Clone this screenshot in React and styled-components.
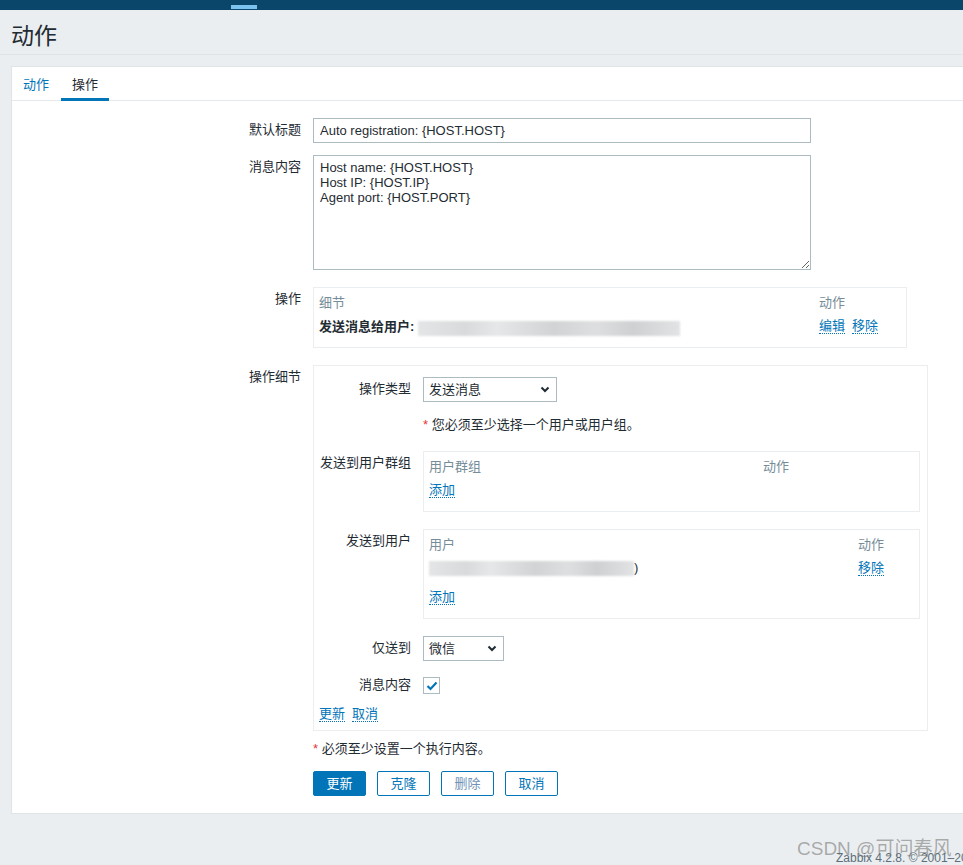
import React from "react";
import styled, { createGlobalStyle } from "styled-components";

const GlobalStyle = createGlobalStyle`
  body {
    margin: 0;
    background: #ebeef0;
    font-family: "Liberation Sans", Arial, "Noto Sans CJK SC", sans-serif;
    font-size: 13px;
    color: #1f2c33;
  }
`;

const TopBar = styled.div`
  height: 10px;
  background: #0a466a;
  display: flex;
  align-items: flex-end;
  padding-left: 231px;
`;

const TopMark = styled.div`
  width: 26px;
  height: 4px;
  margin-bottom: 1px;
  background: #7cc2ef;
`;

const Header = styled.header`
  box-sizing: border-box;
  height: 45px;
  display: flex;
  align-items: center;
  padding: 8px 0 0 11px;
  border-bottom: 1px solid #dfe4e7;
`;

const Title = styled.h1`
  margin: 0;
  font-size: 23px;
  font-weight: normal;
  line-height: 28px;
`;

const Panel = styled.main`
  margin: 11px 0 0 11px;
  background: #fff;
  border: 1px solid #dfe4e7;
  border-right: none;
  padding-bottom: 17px;
`;

const TabBar = styled.nav`
  display: flex;
  gap: 1px;
  border-bottom: 1px solid #e6eaec;
`;

const Tab = styled.span`
  padding: 4px 11px 0;
  line-height: 27px;
  margin-bottom: -1px;
  border-bottom: 3px solid ${(p) => (p.$active ? "#0275b8" : "transparent")};
  color: ${(p) => (p.$active ? "#1f2c33" : "#0275b8")};
`;

const Form = styled.div`
  padding-top: 17px;
`;

const FormRow = styled.div`
  display: grid;
  grid-template-columns: ${(p) => p.$labelWidth || 289}px 1fr;
  column-gap: 12px;
  margin-top: ${(p) => p.$mt || 0}px;
  align-items: start;
`;

const Label = styled.div`
  text-align: right;
  padding-top: ${(p) => (p.$pt === undefined ? 5 : p.$pt)}px;
  line-height: 14px;
  white-space: nowrap;
`;

const TextInput = styled.input`
  box-sizing: border-box;
  width: 498px;
  height: 25px;
  border: 1px solid #acbbc2;
  padding: 0 5px 0 6px;
  font: inherit;
  color: #1f2c33;
  outline: none;
`;

const TextArea = styled.textarea`
  box-sizing: border-box;
  display: block;
  width: 498px;
  height: 115px;
  border: 1px solid #acbbc2;
  padding: 4px 5px 4px 6px;
  font: inherit;
  line-height: 15px;
  color: #1f2c33;
  outline: none;
`;

const MiniTable = styled.div`
  box-sizing: border-box;
  width: ${(p) => p.$width}px;
  border: 1px solid #ebeef0;
  padding: 2px 5px 8px;
`;

const TableRow = styled.div`
  display: grid;
  grid-template-columns: 1fr ${(p) => p.$actionWidth}px;
  align-items: center;
  height: ${(p) => (p.$head ? 22 : 26)}px;
  margin-top: ${(p) => p.$mt || 0}px;
  margin-bottom: ${(p) => (p.$head ? 1 : 0)}px;
  color: ${(p) => (p.$head ? "#768d99" : "#1f2c33")};
  white-space: nowrap;
`;

const Strong = styled.span`
  font-weight: bold;
`;

const Redacted = styled.span`
  display: inline-block;
  vertical-align: middle;
  width: ${(p) => p.$width}px;
  height: 15px;
  background: linear-gradient(
    90deg,
    #e4e5e6 0%,
    #d9dadb 18%,
    #e6e7e8 30%,
    #d2d3d4 52%,
    #dedfe0 68%,
    #cfd0d2 82%,
    #e2e3e4 100%
  );
  filter: blur(1.2px);
`;

const Links = styled.div`
  display: flex;
  gap: 7px;
  line-height: 14px;
  margin-top: ${(p) => p.$mt || 0}px;
`;

const Link = styled.a`
  color: #0275b8;
  text-decoration: none;
  border-bottom: 1px dotted #0275b8;
  cursor: pointer;
`;

const DetailBox = styled.div`
  box-sizing: border-box;
  width: 615px;
  border: 1px solid #ebeef0;
  padding: 11px 6px 8px 5px;
`;

const Select = styled.div`
  box-sizing: border-box;
  width: ${(p) => p.$width}px;
  height: 25px;
  border: 1px solid #acbbc2;
  padding: 0 6px 0 5px;
  display: flex;
  align-items: center;
  justify-content: space-between;
  line-height: 14px;
`;

const Note = styled.div`
  line-height: 14px;
`;

const Star = styled.span`
  color: #e33734;
`;

const CheckBox = styled.div`
  box-sizing: border-box;
  width: 17px;
  height: 17px;
  border: 1px solid #acbbc2;
  display: flex;
  align-items: center;
  justify-content: center;
`;

const ButtonRow = styled.div`
  display: flex;
  gap: 11px;
`;

const Button = styled.button`
  width: 53px;
  height: 25px;
  padding: 0;
  border: 1px solid #0275b8;
  border-radius: 2px;
  background: ${(p) => (p.$primary ? "#0275b8" : "#fff")};
  color: ${(p) => (p.$primary ? "#fff" : p.$muted ? "#7193b8" : "#0275b8")};
  font: inherit;
  line-height: 14px;
  cursor: pointer;
`;

const Footer = styled.footer`
  position: relative;
  height: 52px;
  overflow: hidden;
`;

const FooterText = styled.div`
  padding: 37px 0 0 836px;
  line-height: 14px;
  font-size: 12px;
  color: #5b6f7b;
  white-space: nowrap;
`;

const Watermark = styled.div`
  position: absolute;
  left: 797px;
  top: 25px;
  font-size: 19px;
  line-height: 20px;
  color: rgba(110, 110, 110, 0.55);
  white-space: nowrap;
`;

const Chevron = () => (
  <svg width="10" height="7" viewBox="0 0 10 7">
    <path d="M1.5 1.5 5 5l3.5-3.5" fill="none" stroke="#1f2c33" strokeWidth="2" />
  </svg>
);

const Check = () => (
  <svg width="12" height="10" viewBox="0 0 12 10">
    <path d="M1.5 5 4.5 8 10.5 1.5" fill="none" stroke="#0275b8" strokeWidth="2.2" />
  </svg>
);

const message = "Host name: {HOST.HOST}\nHost IP: {HOST.IP}\nAgent port: {HOST.PORT}";

export default function App() {
  return (
    <>
      <GlobalStyle />
      <TopBar>
        <TopMark />
      </TopBar>
      <Header>
        <Title>动作</Title>
      </Header>
      <Panel>
        <TabBar>
          <Tab>动作</Tab>
          <Tab $active>操作</Tab>
        </TabBar>
        <Form>
          <FormRow>
            <Label>默认标题</Label>
            <TextInput defaultValue="Auto registration: {HOST.HOST}" />
          </FormRow>
          <FormRow $mt={12}>
            <Label>消息内容</Label>
            <TextArea defaultValue={message} />
          </FormRow>
          <FormRow $mt={17}>
            <Label>操作</Label>
            <MiniTable $width={594}>
              <TableRow $head $actionWidth={82}>
                <span>细节</span>
                <span>动作</span>
              </TableRow>
              <TableRow $actionWidth={82}>
                <span>
                  <Strong>发送消息给用户: </Strong>
                  <Redacted $width={262} />
                </span>
                <Links>
                  <Link>编辑</Link>
                  <Link>移除</Link>
                </Links>
              </TableRow>
            </MiniTable>
          </FormRow>
          <FormRow $mt={17}>
            <Label>操作细节</Label>
            <DetailBox>
              <FormRow $labelWidth={92}>
                <Label>操作类型</Label>
                <Select $width={134}>
                  <span>发送消息</span>
                  <Chevron />
                </Select>
              </FormRow>
              <FormRow $labelWidth={92} $mt={16}>
                <span />
                <Note>
                  <Star>*</Star> 您必须至少选择一个用户或用户组。
                </Note>
              </FormRow>
              <FormRow $labelWidth={92} $mt={19}>
                <Label>发送到用户群组</Label>
                <MiniTable $width={497}>
                  <TableRow $head $actionWidth={151}>
                    <span>用户群组</span>
                    <span>动作</span>
                  </TableRow>
                  <TableRow $actionWidth={151}>
                    <Links>
                      <Link>添加</Link>
                    </Links>
                  </TableRow>
                </MiniTable>
              </FormRow>
              <FormRow $labelWidth={92} $mt={17}>
                <Label>发送到用户</Label>
                <MiniTable $width={497}>
                  <TableRow $head $actionWidth={56}>
                    <span>用户</span>
                    <span>动作</span>
                  </TableRow>
                  <TableRow $actionWidth={56}>
                    <span>
                      <Redacted $width={205} />)
                    </span>
                    <Links>
                      <Link>移除</Link>
                    </Links>
                  </TableRow>
                  <TableRow $actionWidth={56} $mt={3}>
                    <Links>
                      <Link>添加</Link>
                    </Links>
                  </TableRow>
                </MiniTable>
              </FormRow>
              <FormRow $labelWidth={92} $mt={17}>
                <Label>仅送到</Label>
                <Select $width={81}>
                  <span>微信</span>
                  <Chevron />
                </Select>
              </FormRow>
              <FormRow $labelWidth={92} $mt={16}>
                <Label $pt={1}>消息内容</Label>
                <CheckBox>
                  <Check />
                </CheckBox>
              </FormRow>
              <Links $mt={13}>
                <Link>更新</Link>
                <Link>取消</Link>
              </Links>
            </DetailBox>
          </FormRow>
          <FormRow $mt={11}>
            <span />
            <Note>
              <Star>*</Star> 必须至少设置一个执行内容。
            </Note>
          </FormRow>
          <FormRow $mt={15}>
            <span />
            <ButtonRow>
              <Button $primary>更新</Button>
              <Button>克隆</Button>
              <Button $muted>删除</Button>
              <Button>取消</Button>
            </ButtonRow>
          </FormRow>
        </Form>
      </Panel>
      <Footer>
        <FooterText>Zabbix 4.2.8. © 2001–2019, Zabbix SIA</FooterText>
        <Watermark>CSDN @可问春风</Watermark>
      </Footer>
    </>
  );
}
